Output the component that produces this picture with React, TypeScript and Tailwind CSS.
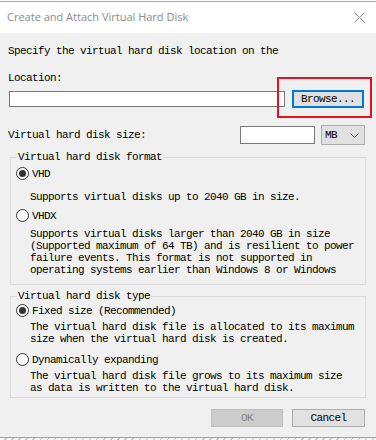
import React from "react";

const mono = "font-['Liberation_Mono',monospace] text-[11px] leading-[12px] tracking-[-0.6px]";

const Radio = ({ checked, label }: { checked?: boolean; label: string }) => (
  <div className="flex items-center h-[13px]">
    <span className="w-[13px] h-[13px] rounded-full border border-[#333] bg-white flex items-center justify-center">
      {checked && <span className="w-[7px] h-[7px] rounded-full bg-[#333]" />}
    </span>
    <span className={`${mono} text-black ml-[3px]`}>{label}</span>
  </div>
);

const Group = ({ title, children, className }: { title: string; children: React.ReactNode; className?: string }) => (
  <fieldset className={`ml-[10px] w-[356px] border border-[#dcdcdc] ${className}`}>
    <legend className={`${mono} text-black ml-[6px] px-[1px]`}>{title}</legend>
    {children}
  </fieldset>
);

export default function App() {
  return (
    <div className="relative w-[376px] h-[440px] bg-[#f0f0f0] overflow-hidden flex flex-col text-black">
      {/* title bar */}
      <div className="bg-white h-[33px] flex flex-col">
        <div className="h-[1px] bg-white" />
        <div className="h-[1px] bg-[#a6a6a6]" />
        <div className="flex-1 flex items-center justify-between pl-[7px] pr-[10px]">
          <span className="font-['Open_Sans',sans-serif] text-[11px] text-[#8c8c8c]">
            Create and Attach Virtual Hard Disk
          </span>
          <svg width="11" height="11" viewBox="0 0 11 11" className="mr-[1px]">
            <path d="M0.5 0.5 L10.5 10.5 M10.5 0.5 L0.5 10.5" stroke="#8a8a8a" strokeWidth="1" />
          </svg>
        </div>
      </div>

      {/* body */}
      <div className="flex flex-col">
        <p className={`${mono} ml-[8px] mt-[12px]`}>Specify the virtual hard disk location on the</p>
        <p className={`${mono} ml-[8px] mt-[15px]`}>Location:</p>

        <div className="flex items-center h-[18px] mt-[6px] ml-[9px]">
          <div className="w-[276px] h-[16px] bg-white border border-[#7a7a7a]" />
          <button className="ml-[7px] w-[72px] h-[18px] bg-[#e1e1e1] border-2 border-[#0078d7] flex items-center justify-center">
            <span className={mono}>Browse...</span>
          </button>
        </div>

        <div className="flex items-center h-[20px] mt-[17px] ml-[8px]">
          <span className={`${mono} w-[232px]`}>Virtual hard disk size:</span>
          <div className="w-[75px] h-[18px] bg-white border border-[#7a7a7a]" />
          <div className="ml-[6px] w-[44px] h-[20px] bg-[#e1e1e1] border border-[#adadad] flex items-center justify-between pl-[3px] pr-[5px]">
            <span className={mono}>MB</span>
            <svg width="9" height="5" viewBox="0 0 9 5">
              <path d="M0.5 0.5 L4.5 4.5 L8.5 0.5" stroke="#555" strokeWidth="1" fill="none" />
            </svg>
          </div>
        </div>

        <Group title="Virtual hard disk format" className="mt-[6px] pb-[8px]">
          <div className="ml-[5px] mt-[4px]">
            <Radio checked label="VHD" />
          </div>
          <p className={`${mono} ml-[19px] mt-[11px]`}>Supports virtual disks up to 2040 GB in size.</p>
          <div className="ml-[5px] mt-[6px]">
            <Radio label="VHDX" />
          </div>
          <p className={`${mono} ml-[19px] mt-[6px] whitespace-pre`}>
            {"Supports virtual disks larger than 2040 GB in size\n(Supported maximum of 64 TB) and is resilient to power\nfailure events. This format is not supported in\noperating systems earlier than Windows 8 or Windows"}
          </p>
        </Group>

        <Group title="Virtual hard disk type" className="mt-[5px] pb-[3px]">
          <div className="ml-[5px] mt-[2px]">
            <Radio checked label="Fixed size (Recommended)" />
          </div>
          <p className={`${mono} ml-[19px] mt-[4px] whitespace-pre`}>
            {"The virtual hard disk file is allocated to its maximum\nsize when the virtual hard disk is created."}
          </p>
          <div className="ml-[5px] mt-[8px]">
            <Radio label="Dynamically expanding" />
          </div>
          <p className={`${mono} ml-[19px] mt-[4px] whitespace-pre`}>
            {"The virtual hard disk file grows to its maximum size\nas data is written to the virtual hard disk."}
          </p>
        </Group>

        <div className="flex justify-end gap-[9px] mt-[11px] pr-[11px]">
          <button className="w-[72px] h-[18px] bg-[#cccccc] border border-[#bfbfbf] flex items-center justify-center">
            <span className={`${mono} text-[#838383]`}>OK</span>
          </button>
          <button className="w-[73px] h-[18px] bg-[#e1e1e1] border border-[#adadad] flex items-center justify-center">
            <span className={mono}>Cancel</span>
          </button>
        </div>
      </div>

      {/* bottom edge */}
      <div className="mt-auto h-[3px] border-t border-[#a0a0a0] bg-[repeating-linear-gradient(135deg,#f6f6f6_0px,#f6f6f6_4px,#c4c4c4_4px,#c4c4c4_5px)]" />

      {/* annotation */}
      <div className="absolute left-[277px] top-[77px] w-[95px] h-[41px] border-2 border-[#e81123]" />
    </div>
  );
}
